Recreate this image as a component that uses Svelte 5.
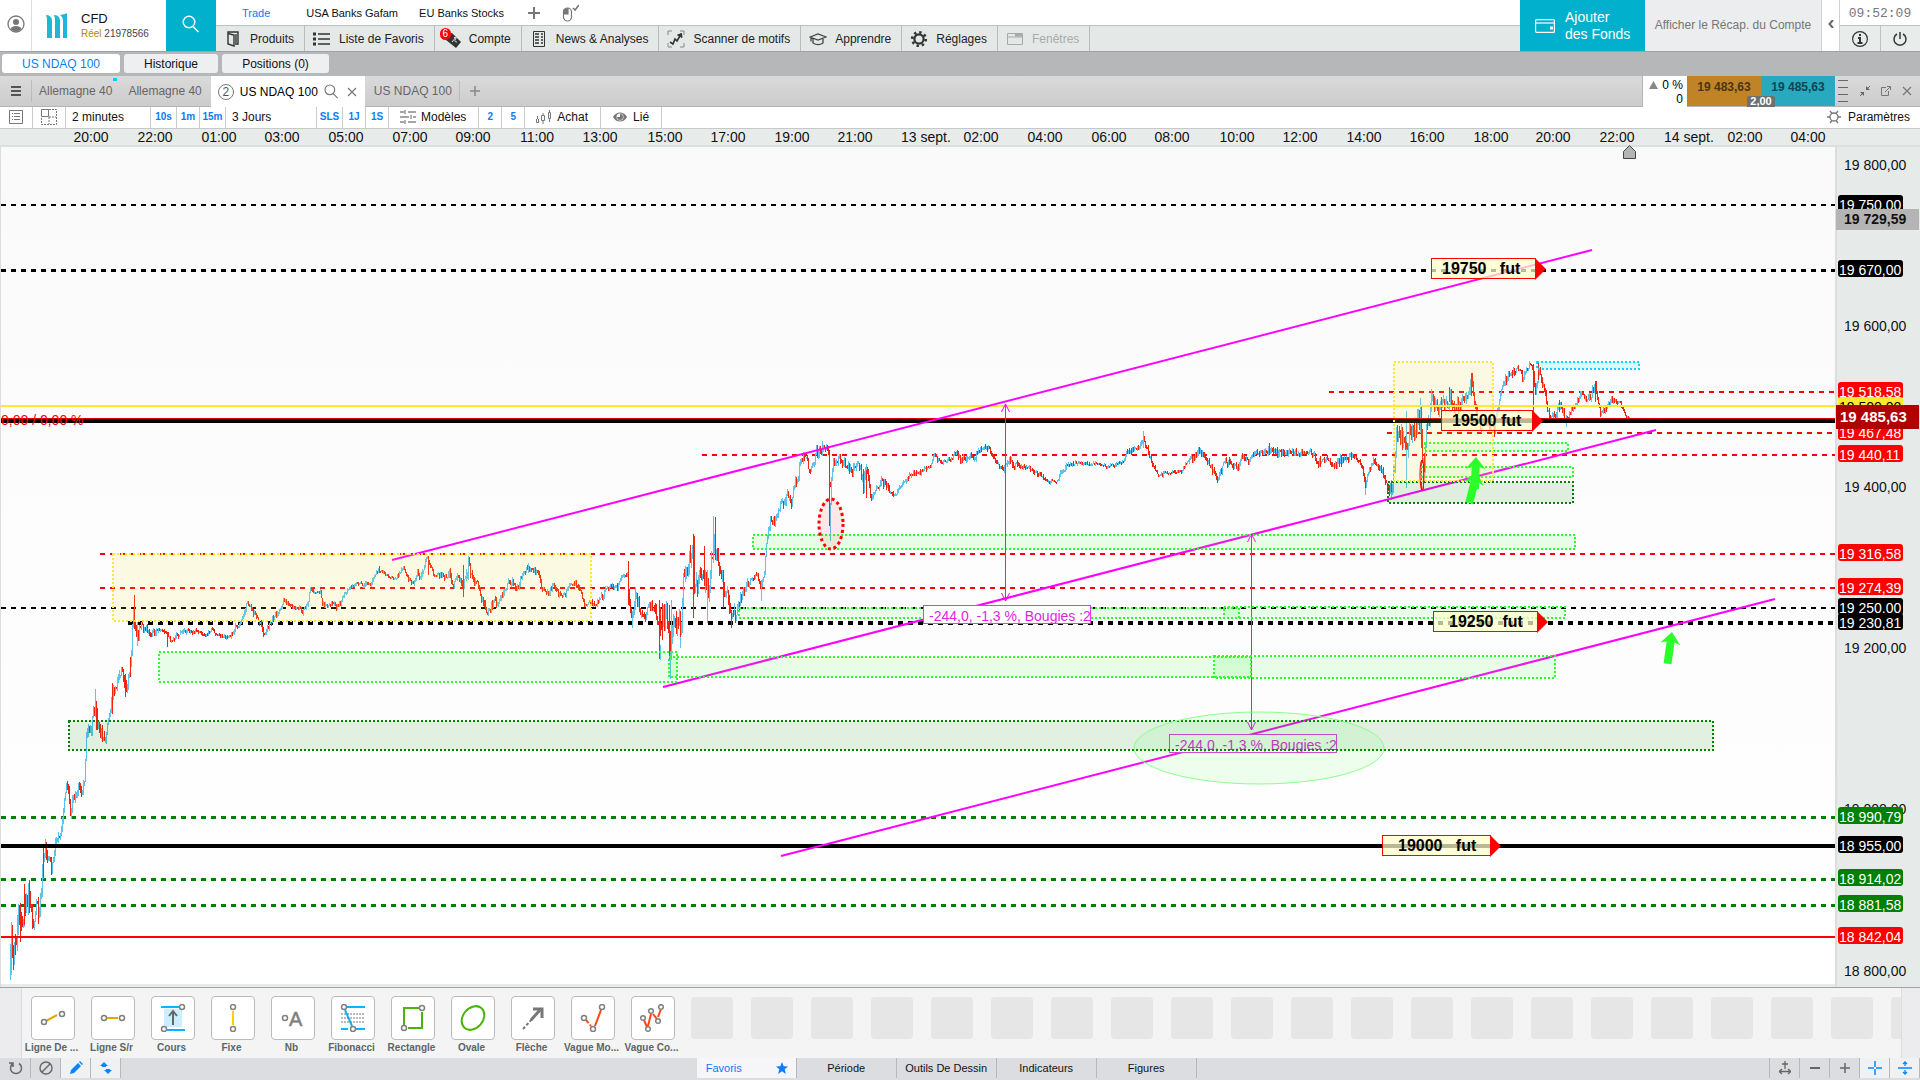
<script lang="ts">
    type Bar = { x: number; top: number; bottom: number };

    const workspaces = ['Trade', 'USA Banks Gafam', 'EU Banks Stocks'];
    const menu = [
        { icon: 'book', label: 'Produits' },
        { icon: 'list', label: 'Liste de Favoris' },
        { icon: 'tag', label: 'Compte', badge: 6 },
        { icon: 'news', label: 'News & Analyses' },
        { icon: 'scanner', label: 'Scanner de motifs' },
        { icon: 'hat', label: 'Apprendre' },
        { icon: 'gear', label: 'Réglages' },
        { icon: 'window', label: 'Fenêtres', disabled: true },
    ];
    const drawingTools = [
        { icon: 'trend', label: 'Ligne De ...' },
        { icon: 'level', label: 'Ligne S/r' },
        { icon: 'range', label: 'Cours' },
        { icon: 'fixed', label: 'Fixe' },
        { icon: 'text', label: 'Nb' },
        { icon: 'fibo', label: 'Fibonacci' },
        { icon: 'rect', label: 'Rectangle' },
        { icon: 'oval', label: 'Ovale' },
        { icon: 'arrow', label: 'Flèche' },
        { icon: 'wave', label: 'Vague Mo...' },
        { icon: 'waves', label: 'Vague Co...' },
    ];
    const emptySlots = Array.from({ length: 21 }, (_, i) => i);
    const paletteTabs = ['Période', 'Outils De Dessin', 'Indicateurs', 'Figures'];

    let workspace = $state('Trade');

    const times: [string, number][] = [
        ['20:00', 91], ['22:00', 155], ['01:00', 219], ['03:00', 282], ['05:00', 346], ['07:00', 410],
        ['09:00', 473], ['11:00', 537], ['13:00', 600], ['15:00', 665], ['17:00', 728], ['19:00', 792],
        ['21:00', 855], ['13 sept.', 926], ['02:00', 981], ['04:00', 1045], ['06:00', 1109], ['08:00', 1172],
        ['10:00', 1237], ['12:00', 1300], ['14:00', 1364], ['16:00', 1427], ['18:00', 1491], ['20:00', 1553],
        ['22:00', 1617], ['14 sept.', 1689], ['02:00', 1745], ['04:00', 1808],
    ];

    // top edges inside the plot
    const grid: [string, number][] = [
        ['19 800,00', 10], ['19 600,00', 171], ['19 400,00', 332], ['19 200,00', 493], ['19 000,00', 654], ['18 800,00', 816],
    ];
    const prices = [
        { text: '19 750,00', top: 48, kind: 'black' },
        { text: '19 670,00', top: 113, kind: 'black' },
        { text: '19 518,58', top: 235, kind: 'red' },
        { text: '19 500,00', top: 250, kind: 'yellow' },
        { text: '19 467,48', top: 276, kind: 'red' },
        { text: '19 440,11', top: 298, kind: 'red' },
        { text: '19 316,58', top: 397, kind: 'red' },
        { text: '19 274,39', top: 431, kind: 'red' },
        { text: '19 250,00', top: 451, kind: 'black' },
        { text: '19 230,81', top: 466, kind: 'black' },
        { text: '18 990,79', top: 660, kind: 'green' },
        { text: '18 955,00', top: 689, kind: 'black' },
        { text: '18 914,02', top: 722, kind: 'green' },
        { text: '18 881,58', top: 748, kind: 'green' },
        { text: '18 842,04', top: 780, kind: 'red' },
    ];

    const levels = [
        { x: 1, y: 205, w: 2, color: '#000' },
        { x: 1, y: 270.5, w: 3, color: '#000' },
        { x: 1329, y: 392, w: 2, color: '#f00' },
        { x: 1387, y: 433, w: 2, color: '#f00' },
        { x: 702, y: 455, w: 2, color: '#f00' },
        { x: 100, y: 554, w: 2, color: '#f00' },
        { x: 100, y: 588, w: 2, color: '#f00' },
        { x: 1, y: 608, w: 2, color: '#000' },
        { x: 128, y: 623, w: 4, color: '#000' },
        { x: 1, y: 817.5, w: 3, color: '#008000' },
        { x: 1, y: 879.5, w: 3, color: '#008000' },
        { x: 1, y: 905.5, w: 3, color: '#008000' },
    ];
    const solids = [
        { y: 406, w: 2, color: '#ffe92e' },
        { y: 421, w: 4, color: '#000' },
        { y: 418.5, w: 1, color: '#e00000' },
        { y: 846, w: 4, color: '#000' },
        { y: 937, w: 2, color: '#f00' },
    ];
    const trends = [
        [392, 560, 1592, 250],
        [663, 687, 1656, 430],
        [781, 856, 1775, 599],
    ];
    const zones = [
        [113, 554, 591, 621, 'yellow'],
        [159, 652, 677, 682, 'lime'],
        [669, 657, 1251, 677, 'lime'],
        [1214, 656, 1555, 678, 'lime'],
        [753, 535, 1575, 549, 'lime'],
        [739, 608, 1239, 618, 'lime'],
        [1224, 607, 1565, 618, 'lime'],
        [69, 721, 1713, 750, 'forest'],
        [1388, 482, 1573, 503, 'forest'],
        [1425, 443, 1568, 451, 'lime'],
        [1421, 467, 1573, 477, 'lime'],
        [1394, 362, 1493, 481, 'yellow'],
        [1537, 362, 1639, 369, 'cyan'],
    ] as [number, number, number, number, string][];
    const flags = [
        { x: 1431, y: 258, w: 105, tx: 1442, text: '19750   fut' },
        { x: 1441, y: 410, w: 92, tx: 1452, text: '19500 fut' },
        { x: 1433, y: 611, w: 105, tx: 1449, text: '19250  fut' },
        { x: 1382, y: 835, w: 109, tx: 1398, text: '19000   fut' },
    ];
    const arrows = [
        [1477, 472, 14],
        [1476, 457, 2],
        [1672, 632, 8],
    ];

    // x, y, candle spread
    const track = `9,978,3 10,945,12 13,945,16 15,948,12 17,930,14 19,912,10 21,930,12 24,900,12 27,905,10 29,895,12
        31,915,8 33,925,6 36,905,5 39,908,9 41,890,6 43,860,10 45,855,10 48,855,5 51,868,6 54,855,5 56,838,5 59,840,6
        62,825,5 64,800,4 66,782,3 68,790,6 70,812,7 73,800,5 76,792,5 79,785,5 81,797,6 84,780,3 86,735,8 88,730,8
        90,735,8 93,715,6 95,705,8 97,722,7 100,735,8 103,735,7 105,742,6 107,725,4 110,712,4 113,692,8 115,690,6
        118,675,6 121,670,5 124,680,6 126,690,5 129,672,4 131,650,4 132,625,5 133,612,6 136,632,5 138,635,5 141,622,4
        143,630,3 146,628,3 150,635,3 155,630,4 160,631,3 166,635,3 170,640,3 178,635,3 184,632,3 195,631,2 205,635,2
        212,630,2 220,637,2 230,636,2 235,628,3 240,622,3 244,612,3 247,603,2 251,609,3 255,616,3 259,622,3 263,632,4
        268,628,4 272,619,4 278,613,3 283,600,3 290,606,2 298,608,3 302,612,3 307,603,3 310,590,3 315,592,2 320,592,2
        322,605,3 328,607,3 333,602,3 336,608,2 342,600,3 348,588,2 356,582,2 362,584,3 370,583,3 375,575,3 377,570,3
        382,572,2 388,578,2 396,578,2 403,566,2 408,580,2 413,583,2 417,572,3 420,578,3 426,558,3 428,561,2 434,575,2
        441,575,3 446,578,3 449,574,4 453,584,4 456,575,4 460,582,4 463,585,6 466,575,6 468,565,8 470,570,6 473,580,4
        477,585,4 480,594,4 484,603,4 487,615,4 490,608,5 493,600,4 498,604,4 502,595,4 505,590,3 508,580,3 512,583,4
        516,590,3 519,584,3 522,573,3 528,568,4 533,570,3 538,572,3 542,590,3 548,592,3 554,585,3 558,595,3 562,598,3
        567,590,3 571,583,2 575,584,3 580,592,3 584,605,2 590,602,3 596,604,4 601,597,4 606,590,4 612,586,3 617,587,3
        622,577,3 627,577,3 629,600,5 632,615,6 635,600,6 637,598,6 640,615,4 645,617,4 649,604,4 654,608,5 657,620,10
        660,620,16 663,618,14 666,610,12 669,640,16 671,650,14 673,625,10 677,625,12 681,625,8 683,580,8 686,562,10
        690,560,10 693,550,8 694,590,14 697,590,10 700,575,8 703,580,10 706,580,14 708,600,6 711,560,8 714,545,10
        717,560,8 720,572,8 724,590,8 728,598,8 731,615,6 733,610,8 736,612,8 742,592,5 745,588,5 750,580,3 756,575,4
        760,585,4 764,572,4 766,545,4 768,530,4 770,520,5 774,522,4 779,508,4 784,500,5 787,497,6 791,502,5 795,482,5
        798,480,4 799,465,3 802,456,6 806,455,4 809,472,3 813,465,3 816,452,6 821,450,6 825,448,3 828,452,5 829,485,4
        831,480,3 833,462,4 838,460,5 843,462,5 850,472,5 855,466,5 858,463,4 863,482,8 867,468,5 870,498,4 873,495,3
        877,488,3 881,480,4 885,486,4 893,497,3 899,487,3 908,477,3 920,471,3 930,466,2 934,455,3 940,463,2 950,459,2
        956,451,3 960,461,3 968,456,4 973,460,4 980,449,3 988,449,3 994,460,3 1003,469,3 1008,462,4 1015,465,4
        1020,467,3 1028,468,3 1037,473,3 1048,482,2 1057,480,3 1065,467,3 1075,463,2 1085,463,2 1096,464,2 1106,467,2
        1115,464,2 1122,462,2 1127,452,3 1138,448,3 1143,440,3 1147,448,4 1152,465,3 1158,476,2 1165,473,2 1174,472,2
        1182,470,2 1189,457,4 1193,458,4 1199,451,4 1203,456,4 1206,458,3 1211,468,4 1217,480,3 1224,463,5 1232,465,4
        1238,467,3 1242,455,4 1248,461,3 1254,453,3 1263,452,3 1272,450,4 1282,453,4 1292,452,3 1303,454,3 1310,451,3
        1318,462,4 1327,459,3 1332,468,3 1340,460,4 1347,460,4 1353,455,3 1361,465,3 1365,486,4 1368,472,3 1373,460,3
        1380,468,3 1386,482,4 1389,492,6 1392,488,7 1394,468,8 1396,440,10 1399,435,10 1404,440,8 1407,448,10
        1409,425,10 1412,430,12 1415,430,12 1418,418,12 1420,420,12 1422,465,12 1424,468,10 1426,430,8 1429,418,7
        1431,402,10 1435,405,8 1438,410,7 1441,402,8 1445,404,7 1450,400,8 1455,408,7 1460,402,7 1465,398,8 1469,390,5
        1471,380,5 1474,400,5 1477,415,5 1480,428,4 1484,422,4 1490,427,4 1494,430,5 1497,410,5 1500,395,4 1505,380,5
        1510,375,5 1514,373,5 1519,372,6 1523,378,5 1527,370,3 1530,363,3 1533,372,3 1535,395,3 1537,380,5 1539,372,5
        1542,385,4 1545,390,4 1547,410,4 1550,415,4 1555,418,4 1558,402,5 1563,414,4 1567,420,3 1572,410,4 1577,400,4
        1580,395,4 1586,400,4 1592,392,5 1595,385,4 1597,400,4 1601,415,4 1605,408,4 1612,400,3 1620,404,2 1626,417,2
        1630,418,1`;
    // single long candles: x, top, bottom, direction
    const spikes = `11,922,975,u 12,925,958,d 15,934,955,d 20,903,942,d 24,884,925,d 29,880,913,d 38,897,924,d
        43,848,878,d 95,689,717,u 96,701,730,d 112,683,714,d 125,674,697,d 130,657,677,d 134,595,629,d 137,622,646,u
        167,632,647,d 428,556,575,d 463,565,597,d 468,556,580,u 628,561,605,d 632,612,628,u 635,587,610,u 659,600,659,d
        660,645,660,u 662,603,640,d 669,605,660,d 670,645,679,u 671,600,660,u 680,627,648,u 693,534,618,d 704,546,575,d
        707,570,623,u 713,516,560,u 715,517,560,d 723,575,608,d 731,610,628,d 761,580,601,u 822,441,455,u 829,458,526,d
        830,503,541,u 831,478,505,u 866,470,498,d 1143,431,448,u 1269,443,455,d 1365,478,495,u 1391,480,500,u
        1406,411,488,u 1420,398,430,u 1421,460,490,d 1423,464,489,d 1431,395,412,u 1449,387,402,d 1471,373,396,d
        1494,424,437,d 1533,364,420,d 1538,361,380,d 1566,415,427,u 1595,381,402,d`;

    // small seeded generator, so that the series is the same on each load
    function buildCandles() {
        const up: Bar[] = [];
        const down: Bar[] = [];
        const pts = track.trim().split(/\s+/).map((p) => p.split(',').map(Number));
        let seed = 17;
        const rnd = () => {
            seed = (seed * 1103515245 + 12345) % 2147483648;
            return seed / 2147483648;
        };
        let prev = pts[0][1];
        for (let i = 1; i < pts.length; i++) {
            const [x0, y0, a0] = pts[i - 1];
            const [x1, y1, a1] = pts[i];
            for (let x = x0 + 1; x <= x1; x++) {
                const t = (x - x0) / (x1 - x0);
                const amp = a0 + (a1 - a0) * t;
                const close = y0 + (y1 - y0) * t + (rnd() - 0.5) * amp * 1.6;
                const top = Math.round(Math.min(prev, close) - rnd() * amp * 0.9);
                const bottom = Math.max(top + 2, Math.round(Math.max(prev, close) + rnd() * amp * 0.9));
                (close < prev ? up : down).push({ x, top, bottom });
                prev = close;
            }
        }
        for (const s of spikes.trim().split(/\s+/)) {
            const [x, top, bottom, dir] = s.split(',');
            (dir === 'u' ? up : down).push({ x: +x, top: +top, bottom: +bottom });
        }
        const toPath = (bars: Bar[]) => bars.map((b) => `M${b.x + 0.5} ${b.top}V${b.bottom}`).join('');
        return { up: toPath(up), down: toPath(down) };
    }

    const candles = buildCandles();
</script>

{#snippet icon(name: string)}
    {#if name === 'book'}
        <svg width="16" height="18" viewBox="0 0 16 18" fill="none" stroke="#333" stroke-width="1.4"><path d="M3 3.5 9 5v11l-6-2zM3 3.5V2h10v12h-3M11 4v9" /></svg>
    {:else if name === 'list'}
        <svg width="18" height="14" viewBox="0 0 18 14" stroke="#333" stroke-width="1.6"><path d="M5 2h12M5 7h12M5 12h12" /><path d="M0 2h3M0 7h3M0 12h3" stroke-width="3" /></svg>
    {:else if name === 'tag'}
        <svg width="20" height="20" viewBox="0 0 20 20"><path d="M3 5 10 4l9 9-5 6-10-8z" fill="#333" /><path d="M12 8.500c2-.5 2.500 1 1.500 2s-1 2.500 1.500 2.500M10 13l5-6" stroke="#e4e9e8" fill="none" /></svg>
    {:else if name === 'news'}
        <svg width="14" height="16" viewBox="0 0 14 16" fill="none" stroke="#333"><path d="M1.500.5h11v15h-11z" /><path d="M3 3h4M9 3h2M3 6h4M9 6h2M3 9h4M9 9h2M3 12h4M9 12h2" stroke-width="1.500" /></svg>
    {:else if name === 'scanner'}
        <svg width="18" height="18" viewBox="0 0 18 18" fill="none" stroke="#333"><path d="M1 5V1h4M13 1h4v4M1 13v4h4M13 17h4v-4" stroke="#888" /><path d="m3 12 3 2 2-5 2 2 4-7" stroke-width="1.600" /><path d="m10.500 5 4-1.500.5 4z" fill="#333" /></svg>
    {:else if name === 'hat'}
        <svg width="18" height="14" viewBox="0 0 18 14" fill="none" stroke="#444" stroke-width="1.300"><path d="m1 5 8-3 8 3-8 3zM4 7v4c3 2 7 2 10 0V7M2 5.500v4" /></svg>
    {:else if name === 'gear'}
        <svg width="18" height="18" viewBox="0 0 18 18" fill="none" stroke="#333"><circle cx="9" cy="9" r="4.600" stroke-width="2.200" /><circle cx="9" cy="9" r="6.800" stroke-width="2.600" stroke-dasharray="2.400 2.940" /></svg>
    {:else if name === 'window'}
        <svg width="18" height="14" viewBox="0 0 18 14" fill="none" stroke="#aaa"><path d="M1.500 1.500h15v11h-15zM1.500 5h15" /><path d="M9 3h7" stroke-width="3" /></svg>
    {:else if name === 'search'}
        <svg viewBox="0 0 18 18" fill="none" stroke="currentColor" stroke-width="1.400"><circle cx="7" cy="7" r="5.800" /><path d="m11 11.500 5.500 5.500" /></svg>
    {:else if name === 'close'}
        <svg width="10" height="10" viewBox="0 0 10 10" stroke="#777" stroke-width="1.200"><path d="m1 1 8 8M9 1 1 9" /></svg>
    {:else if name === 'plus'}
        <svg width="12" height="12" viewBox="0 0 12 12" stroke="#777" stroke-width="2"><path d="M6 0v12M0 6h12" /></svg>
    {/if}
{/snippet}

{#snippet toolIcon(name: string)}
    <svg width="28" height="28" viewBox="0 0 28 28" fill="none" stroke-width="2">
        {#if name === 'trend'}
            <path d="m7 17 11-6" stroke="#e0a800" /><g class="knobs"><circle cx="5" cy="18" r="2.500" /><circle cx="23" cy="10" r="2.500" /></g>
        {:else if name === 'level'}
            <path d="M8 14h11" stroke="#e0a800" /><g class="knobs"><circle cx="5" cy="14" r="2.500" /><circle cx="23" cy="14" r="2.500" /></g>
        {:else if name === 'range'}
            <path d="M5 5h18v18H5z" fill="#ccefff" /><path d="M2 3h18M8 26h18" stroke="#00b8ff" /><path d="M14 21V7m-4 5 4-5 4 5" stroke="#666" /><g class="knobs"><circle cx="23" cy="3" r="2.500" /><circle cx="5" cy="25" r="2.500" /></g>
        {:else if name === 'fixed'}
            <path d="M14 7v14" stroke="#ffd000" /><g class="knobs"><circle cx="14" cy="3" r="2.500" /><circle cx="14" cy="25" r="2.500" /></g>
        {:else if name === 'text'}
            <g class="knobs"><circle cx="6" cy="14" r="2.500" /></g><text x="10" y="22" fill="#808080">A</text>
        {:else if name === 'fibo'}
            <path d="M8 3h18M2 25h7M17 25h9M6 6l7 16" stroke="#00b8ff" /><path d="M2 10h24M2 14h24M2 18h24" stroke="#777" stroke-width="1" stroke-dasharray="2 1" /><g class="knobs"><circle cx="5" cy="3" r="2.500" /><circle cx="14" cy="25" r="2.500" /></g>
        {:else if name === 'rect'}
            <path d="M20 4H5v17M9 24h14V8" stroke="#4bb409" /><g class="knobs"><circle cx="23" cy="4" r="2.500" /><circle cx="5" cy="24" r="2.500" /></g>
        {:else if name === 'oval'}
            <ellipse cx="14" cy="14" rx="13" ry="10" transform="rotate(-50 14 14)" stroke="#4bb409" />
        {:else if name === 'arrow'}
            <path d="m4 25 9-10" stroke="#777" stroke-dasharray="3 2" /><path d="m12 16 9-10" stroke="#777" stroke-width="3" /><path d="M14 5h9v9" stroke="#777" stroke-width="3" />
        {:else if name === 'wave'}
            <path d="m7 16 5 6" stroke="#ff4712" stroke-dasharray="4 2" /><path d="m16 22 6-16" stroke="#ff4712" /><g class="knobs"><circle cx="5" cy="14" r="2.500" /><circle cx="14" cy="25" r="2.500" /><circle cx="23" cy="3" r="2.500" /></g>
        {:else}
            <path d="m5 16 3 7m1-1 3-12m2 0 4 5m1-2 3-8" stroke="#ff4712" /><g class="knobs"><circle cx="4" cy="14" r="2.300" /><circle cx="9" cy="25" r="2.300" /><circle cx="12" cy="7" r="2.300" /><circle cx="19" cy="17" r="2.300" /><circle cx="22" cy="3" r="2.300" /></g>
        {/if}
    </svg>
{/snippet}

{#snippet measure(x: number, y1: number, y2: number, bx: number, by: number)}
    <g class="measure">
        <path d="M{x} {y1}V{y2}M{x - 4} {y1 + 8}l4-8 4 8M{x - 4} {y2 - 8}l4 8 4-8" />
        <rect x={bx + 0.5} y={by + 0.5} width="167" height="18" />
        <text x={bx + 6} y={by + 16}>-244,0, -1,3 %, Bougies :2</text>
    </g>
{/snippet}

<div class="app">
    <header class="top">
        <button class="user" aria-label="Profil">
            <svg width="18" height="20" viewBox="0 0 18 20"><circle cx="9" cy="10" r="8" fill="none" stroke="#777" stroke-width="1.300" /><circle cx="9" cy="8" r="3" fill="#777" /><path d="M3.500 15c1-4 10-4 11 0-3 3-8 3-11 0z" fill="#777" /></svg>
        </button>
        <div class="account">
            <svg width="22" height="26" viewBox="0 0 22 26" fill="#1cb9d6"><path d="M0 2q5 0 6 5v18H1V8Q1 4 0 2zM8 2q5 0 6 5v18H9V8Q9 4 8 2zM14 2q6-1 7-2v25h-4V8q0-4-3-6z" /></svg>
            <div>
                <div class="account-name">CFD</div>
                <div class="account-id"><span>Réel</span> 21978566</div>
            </div>
        </div>
        <button class="find" aria-label="Rechercher">{@render icon('search')}</button>
        <div class="nav">
            <nav class="workspaces">
                {#each workspaces as w}
                    <button class:current={w === workspace} onclick={() => (workspace = w)}>{w}</button>
                {/each}
                <button class="mini" aria-label="Ajouter un espace">{@render icon('plus')}</button>
                <button class="mouse" aria-label="Mode souris">
                    <svg width="18" height="18" viewBox="0 0 18 18" fill="none" stroke="#777" stroke-width="1.200"><rect x="2.500" y="4" width="8" height="13" rx="4" /><path d="M3 10V6l4-1.500V10z" fill="#777" /><path d="m12 4 2 2 4-5" stroke-width="1.600" /></svg>
                </button>
            </nav>
            <nav class="menu">
                {#each menu as m}
                    <button disabled={m.disabled}>
                        <span class="menu-icon">{@render icon(m.icon)}{#if m.badge}<span class="badge">{m.badge}</span>{/if}</span>
                        {m.label}
                    </button>
                {/each}
            </nav>
        </div>
        <button class="funds">
            <svg width="20" height="14" viewBox="0 0 20 14" fill="none" stroke="#fff" stroke-width="1.200"><rect x=".6" y=".6" width="18.800" height="12.800" rx="1" /><path d="M1 4h18" /><path d="M15 9h3" stroke-width="3" /></svg>
            <span>Ajouter<br />des Fonds</span>
        </button>
        <button class="recap">Afficher le Récap. du Compte</button>
        <button class="fold" aria-label="Replier"><svg width="6" height="8" viewBox="0 0 6 8" fill="none" stroke="#666" stroke-width="2"><path d="M5 0 1.500 4 5 8" /></svg></button>
        <div class="session">
            <time>09:52:09</time>
            <div class="session-actions">
                <button aria-label="Informations"><svg width="18" height="18" viewBox="0 0 18 18" fill="none" stroke="#333" stroke-width="1.200"><circle cx="9" cy="9" r="7.400" /><path d="M7 8h2v4.500M6.500 13h5" stroke-width="2" /><path d="M8 5h2" stroke-width="2" /></svg></button>
                <button aria-label="Déconnexion"><svg width="16" height="18" viewBox="0 0 16 18" fill="none" stroke="#333" stroke-width="1.500"><path d="M5 4a6 6 0 1 0 6 0M8 2v7" /></svg></button>
            </div>
        </div>
    </header>

    <nav class="views">
        <button class="current">US NDAQ 100</button>
        <button>Historique</button>
        <button>Positions (0)</button>
    </nav>

    <div class="tabs">
        <button class="burger" aria-label="Menu"><svg width="10" height="10" viewBox="0 0 10 10" stroke="#555" stroke-width="2"><path d="M0 1h10M0 5h10M0 9h10" /></svg></button>
        <button class="tab marked">Allemagne 40</button>
        <button class="tab">Allemagne 40</button>
        <div class="tab active">
            <span class="count">2</span>
            <span>US NDAQ 100</span>
            <button class="lens" aria-label="Chercher un marché">{@render icon('search')}</button>
            <button aria-label="Fermer l'onglet">{@render icon('close')}</button>
        </div>
        <button class="tab last">US NDAQ 100</button>
        <button class="add" aria-label="Nouvel onglet"><svg width="10" height="10" viewBox="0 0 10 10" stroke="#888" stroke-width="1.500"><path d="M5 0v10M0 5h10" /></svg></button>
        <div class="change">
            <span><svg width="9" height="8" viewBox="0 0 9 8" fill="#888"><path d="M4.500 0 9 8H0z" /></svg> 0 %</span>
            <span>0</span>
        </div>
        <div class="deal">
            <button class="sell">19 483,63</button>
            <button class="buy">19 485,63</button>
            <span class="spread">2,00</span>
        </div>
        <div class="window-actions">
            <svg width="10" height="24" viewBox="0 0 10 24" stroke="#666"><path d="M0 1.500h10M0 8.500h10M0 15.500h10M0 22.500h10" /></svg>
            <button aria-label="Réduire"><svg width="12" height="12" viewBox="0 0 12 12" stroke="#666" fill="#666"><path d="M1 11l3-3M11 1 8 4" /><path d="M1 7h4v4zM7 1v4h4z" stroke="none" /></svg></button>
            <button aria-label="Détacher"><svg width="10" height="10" viewBox="0 0 10 10" stroke="#777" fill="none"><path d="M5 1.500H.5v8h7V5M4 6l5-5M6 .5h3.500V4" /></svg></button>
            <button aria-label="Fermer">{@render icon('close')}</button>
        </div>
    </div>

    <div class="toolbar">
        <button class="cell square" aria-label="Liste"><svg width="14" height="14" viewBox="0 0 14 14" fill="none" stroke="#777"><path d="M.5.5h13v13H.5zM5 3.500h6M5 6.500h6M5 9.500h6M3 3.500h1M3 6.500h1M3 9.500h1" /></svg></button>
        <button class="cell square" aria-label="Disposition"><svg width="16" height="16" viewBox="0 0 16 16" fill="none" stroke="#777"><path d="M.5.5h7v7h-7z" /><path d="M8 .5h7.500v15H.5V8M8 8h7M8 8v7" stroke-dasharray="2 1" /></svg></button>
        <button class="cell period">2 minutes</button>
        <button class="cell short wide">10s</button>
        <button class="cell short">1m</button>
        <button class="cell short wide">15m</button>
        <button class="cell period days">3 Jours</button>
        <button class="cell short wide">SLS</button>
        <button class="cell short">1J</button>
        <button class="cell short">1S</button>
        <button class="cell action">
            <svg width="16" height="14" viewBox="0 0 16 14" stroke="#888" stroke-width="1.300"><path d="M0 2h4M8 2h8M0 7h9M13 7h3M0 12h4M8 12h8M5 0v4M11 5v4M5 10v4" /></svg>
            Modèles
        </button>
        <button class="cell short">2</button>
        <button class="cell short">5</button>
        <button class="cell action">
            <svg width="16" height="14" viewBox="0 0 16 14" fill="none" stroke="#777"><path d="M.5 9v3.500h2V9M5.500 5.500h3v5h-3zM7 3v2M7 11v3M12.500 2.500h2v6h-2zM13.500 0v2M13.500 9v3M1.500 6v3" /></svg>
            Achat
        </button>
        <button class="cell action">
            <svg width="16" height="12" viewBox="0 0 16 12"><path d="M1 6c3-6 11-6 14 0-3 6-11 6-14 0z" fill="#777" /><circle cx="8" cy="6" r="3.500" fill="#fff" /><path d="M8 6V3a3 3 0 1 1-3 3z" fill="#777" /></svg>
            Lié
        </button>
        <button class="settings">
            <svg width="14" height="14" viewBox="0 0 14 14" fill="none" stroke="#777" stroke-width="1.300"><circle cx="7" cy="7" r="4" /><path d="M0 7h3M11 7h3M3 1l2 2.500M11 1 9 3.500M3 13l2-2.500M11 13l-2-2.500" /></svg>
            Paramètres
        </button>
    </div>

    <div class="time-axis">
        {#each times as [label, x]}
            <span style="left: {x}px">{label}</span>
        {/each}
    </div>

    <main class="chart">
        <svg class="plot" width="100%" height="100%">
            <g transform="translate(0 -147)">
                <g shape-rendering="crispEdges">
                    {#each levels as l}
                        <line x1={l.x} x2="100%" y1={l.y} y2={l.y} stroke={l.color} stroke-width={l.w} stroke-dasharray="5 5" />
                    {/each}
                    <path class="up" d={candles.up} />
                    <path class="down" d={candles.down} />
                    {#each solids as s}
                        <line x1="1" x2="100%" y1={s.y} y2={s.y} stroke={s.color} stroke-width={s.w} />
                    {/each}
                </g>
                {#each trends as [x1, y1, x2, y2]}
                    <line class="trend" {x1} {y1} {x2} {y2} />
                {/each}
                {@render measure(1251.5, 534, 730, 1169, 734)}
                <g shape-rendering="crispEdges">
                    {#each zones as [x1, y1, x2, y2, kind]}
                        <rect class="zone {kind}" x={x1} y={y1} width={x2 - x1} height={y2 - y1} />
                    {/each}
                </g>
                {@render measure(1005.5, 404, 601, 923, 605)}
                <ellipse class="target" cx="831" cy="524" rx="12" ry="25" />
                <ellipse class="pool" cx="1259" cy="748" rx="125" ry="36" />
                <ellipse class="drop" cx="1422" cy="475" rx="2" ry="15" />
                {#each arrows as [x, y, angle]}
                    <path class="arrow" transform="translate({x} {y}) rotate({angle})" d="M0 0 10 12 4 10V32H-4V10L-10 12z" />
                {/each}
                {#each flags as f}
                    <g class="flag">
                        <rect x={f.x + 0.5} y={f.y + 0.5} width={f.w - 1} height="20" />
                        <path d="M{f.x + f.w - 1} {f.y}l11 11-11 11z" />
                        <text x={f.tx} y={f.y + 16}>{f.text}</text>
                    </g>
                {/each}
                <text class="variation" x="1" y="425">0,00 / 0,00 %</text>
                <path d="M1623.500 158.500v-7l6-6 6 6v7z" fill="#b4b4b4" stroke="#444" />
            </g>
        </svg>
        <aside class="price-axis">
            {#each grid as [text, top]}
                <span class="grid" style="top: {top}px">{text}</span>
            {/each}
            {#each prices as p}
                <span class="price {p.kind}" style="top: {p.top}px">{p.text}</span>
            {/each}
            <span class="cursor">19 729,59</span>
            <span class="quote">19 485,63</span>
        </aside>
    </main>

    <section class="palette">
        <div class="slots">
            {#each drawingTools as t}
                <button class="tool">
                    <span class="tile">{@render toolIcon(t.icon)}</span>
                    <span class="tool-name">{t.label}</span>
                </button>
            {/each}
            {#each emptySlots as i (i)}
                <span class="slot"></span>
            {/each}
        </div>
    </section>

    <footer>
        <button class="sq" aria-label="Réinitialiser"><svg width="14" height="14" viewBox="0 0 14 14" fill="none" stroke="#666" stroke-width="1.500"><path d="M4 2.500a5.500 5.500 0 1 0 6 0M4 6V2H0" /></svg></button>
        <button class="sq" aria-label="Désactiver"><svg width="14" height="14" viewBox="0 0 14 14" fill="none" stroke="#666" stroke-width="1.400"><circle cx="7" cy="7" r="6" /><path d="m3 11 8-8" /></svg></button>
        <button class="sq on" aria-label="Dessiner"><svg width="14" height="14" viewBox="0 0 14 14" fill="#0a84ff"><path d="m1 13 1-4 7-7 3 3-7 7zM10 1l1-1 3 3-1 1z" /></svg></button>
        <button class="sq on" aria-label="Ordres"><svg width="12" height="12" viewBox="0 0 12 12" fill="#0a84ff"><path d="M4 0l4 4H6v1H2V4H0zM8 12l4-4h-2V7H6v1H4z" /></svg></button>
        <div class="palette-tabs">
            <button class="current">Favoris <svg width="12" height="12" viewBox="0 0 12 12" fill="#0a7cff"><path d="m6 0 1.700 4.200 4.300.2-3.300 2.800L9.800 12 6 9.300 2.200 12l1.100-4.800L0 4.400l4.300-.2z" /></svg></button>
            {#each paletteTabs as t}
                <button>{t}</button>
            {/each}
        </div>
        <div class="zoom">
            <button class="sq" aria-label="Ajuster"><svg width="12" height="14" viewBox="0 0 12 14" fill="none" stroke="#666" stroke-width="1.300"><path d="M6 0v8M3 3h6M0 10.500h12M3 8l-3 2.500L3 13M9 8l3 2.500L9 13" /></svg></button>
            <button class="sq" aria-label="Dézoomer"><svg width="10" height="10" viewBox="0 0 10 10" stroke="#666" stroke-width="2"><path d="M0 5h10" /></svg></button>
            <button class="sq" aria-label="Zoomer"><svg width="10" height="10" viewBox="0 0 10 10" stroke="#666" stroke-width="1.500"><path d="M0 5h10M5 0v10" /></svg></button>
            <button class="sq on" aria-label="Réticule"><svg width="14" height="14" viewBox="0 0 14 14" stroke="#0a84ff" stroke-width="1.500"><path d="M0 7h6M8 7h6M7 0v6M7 8v6" /></svg></button>
            <button class="sq on" aria-label="Échelle"><svg width="14" height="14" viewBox="0 0 14 14" fill="none" stroke="#0a84ff" stroke-width="1.300"><path d="M0 7h14M7 1v4M7 9v4M5 3l2-2 2 2M5 11l2 2 2-2" /></svg></button>
        </div>
    </footer>
</div>

<style>
    :global(body) {
        margin: 0;
        background: #fff;
    }

    .app {
        display: flex;
        flex-direction: column;
        min-height: 100vh;
        overflow: hidden;
        font: 12px/14px 'Liberation Sans', Arial, sans-serif;
        color: #111;
    }

    button {
        display: flex;
        align-items: center;
        padding: 0;
        border: 0;
        background: none;
        color: inherit;
        font: inherit;
        white-space: nowrap;
    }

    svg {
        display: block;
        flex: none;
    }

    .top {
        display: flex;
        height: 51px;
        border-bottom: 1px solid #98a2b3;
    }

    .user {
        width: 31px;
        justify-content: center;
        border-right: 1px solid #ddd;
        box-sizing: content-box;
        padding-bottom: 4px;
    }

    .account {
        display: flex;
        align-items: center;
        gap: 13px;
        width: 120px;
        padding-left: 14px;
    }

    .account-name {
        font-size: 13px;
        line-height: 16px;
    }

    .account-id {
        font-size: 10px;
        color: #444;
    }

    .account-id span {
        color: #b8860b;
    }

    .find {
        width: 50px;
        justify-content: center;
        background: #00b0cc;
        color: #fff;
    }

    .find svg {
        width: 18px;
        height: 18px;
        margin-bottom: 4px;
    }

    .nav {
        flex: 1;
        display: flex;
        flex-direction: column;
    }

    .workspaces {
        display: flex;
        align-items: center;
        gap: 21px;
        height: 25px;
        padding-left: 26px;
        font-size: 11px;
        border-bottom: 1px solid #bcc1c1;
    }

    .workspaces button:first-child {
        margin-right: 15px;
    }

    .workspaces .current,
    .views .current {
        color: #0a7cff;
    }

    .mini {
        margin-left: 3px;
    }

    .menu {
        display: flex;
        flex: 1;
        background: #e4e9e8;
    }

    .menu button {
        gap: 6px;
        padding: 0 10px 0 6px;
        border-right: 1px solid #b8bcbc;
        color: #222;
    }

    .menu button:disabled {
        color: #aaa;
    }

    .menu-icon {
        position: relative;
        display: flex;
        justify-content: center;
        width: 22px;
    }

    .badge {
        position: absolute;
        left: -1px;
        top: -1px;
        width: 11px;
        border-radius: 6px;
        background: #f00;
        color: #fff;
        font-size: 10px;
        line-height: 12px;
    }

    .funds {
        gap: 10px;
        width: 125px;
        padding-left: 15px;
        background: #00b0cc;
        color: #fff;
        font-size: 14px;
        line-height: 17px;
        text-align: left;
    }

    .recap {
        justify-content: center;
        width: 176px;
        padding-bottom: 1px;
        background: #ebedef;
        color: #777;
    }

    .fold {
        justify-content: center;
        width: 19px;
        padding-bottom: 3px;
        border: solid #d0d0d0;
        border-width: 0 1px;
    }

    .session {
        display: flex;
        flex-direction: column;
        width: 80px;
    }

    time {
        height: 25px;
        border-bottom: 1px solid #bcc1c1;
        color: #777;
        font: 13px/27px 'Liberation Mono', monospace;
        text-align: center;
    }

    .session-actions {
        flex: 1;
        display: flex;
        background: #e8edec;
    }

    .session-actions button {
        flex: 1;
        justify-content: center;
    }

    .session-actions button + button {
        border-left: 1px solid #bcc1c1;
    }

    .views {
        display: flex;
        gap: 4px;
        padding: 2px 2px 3px;
        background: #b5b7b9;
    }

    .views button {
        justify-content: center;
        height: 19px;
        width: 107px;
        border-radius: 3px;
        background: #eeeff1;
    }

    .views .current {
        width: 118px;
        background: #fff;
    }

    .views button:nth-child(2) {
        width: 94px;
    }

    .tabs {
        display: flex;
        height: 30px;
        border-bottom: 1px solid #b4b4b4;
        background: linear-gradient(#dadada, #cccccc);
        color: #666;
    }

    .burger {
        justify-content: center;
        width: 32px;
        margin: 4px 0;
        border-right: 1px solid #bbb;
    }

    .tab {
        position: relative;
        padding: 0 9px 0 7px;
    }

    .tab.marked::after {
        content: '';
        position: absolute;
        right: 4px;
        top: 2px;
        width: 4px;
        height: 3px;
        background: #00d0ff;
    }

    .tab.active {
        display: flex;
        align-items: center;
        gap: 6px;
        height: 31px;
        padding: 0 8px 0 7px;
        background: #fff;
        color: #000;
    }

    .tab.active .lens {
        color: #777;
        margin-right: 2px;
    }

    .lens svg {
        width: 15px;
        height: 15px;
    }

    .count {
        width: 14px;
        border: 1px solid #777;
        border-radius: 50%;
        color: #555;
        text-align: center;
    }

    .tab.last {
        padding-left: 9px;
        padding-right: 7px;
    }

    .add {
        margin: 5px 0;
        padding-left: 10px;
        border-left: 1px solid #bbb;
    }

    .change {
        display: flex;
        flex-direction: column;
        align-items: flex-end;
        justify-content: center;
        box-sizing: border-box;
        width: 45px;
        height: 31px;
        margin-left: auto;
        padding-right: 4px;
        border-left: 1px solid #b4b4b4;
        background: #fff;
        color: #000;
    }

    .change span {
        display: flex;
        align-items: center;
        gap: 4px;
    }

    .deal {
        position: relative;
        display: flex;
        width: 148px;
        font-weight: bold;
    }

    .deal button {
        flex: 1;
        justify-content: center;
        align-items: flex-start;
        padding-top: 4px;
    }

    .sell {
        background: #c08427;
        color: #4c3511;
    }

    .buy {
        background: #28a9c0;
        color: #104450;
    }

    .spread {
        position: absolute;
        left: 60px;
        bottom: -1px;
        width: 28px;
        border-radius: 2px 2px 0 0;
        background: #6b7072;
        color: #fff;
        font-size: 11px;
        line-height: 11px;
        text-align: center;
    }

    .window-actions {
        display: flex;
        align-items: center;
        justify-content: space-between;
        width: 74px;
        padding: 0 8px 0 3px;
    }

    .toolbar {
        display: flex;
        height: 21px;
        border-bottom: 1px solid #c6c9c9;
        background: #fff;
    }

    .cell {
        padding-bottom: 1px;
        border-right: 1px solid #ccc;
    }

    .square {
        justify-content: center;
        width: 33px;
    }

    .period {
        width: 85px;
        padding-left: 6px;
    }

    .period.days {
        width: 91px;
    }

    .short {
        justify-content: center;
        width: 23px;
        color: #0a7cff;
        font-size: 10px;
        font-weight: bold;
    }

    .short.wide {
        width: 26px;
    }

    .action {
        gap: 5px;
        padding: 0 12px 1px 11px;
    }

    .settings {
        gap: 7px;
        margin-left: auto;
        padding: 0 10px 1px 0;
    }

    .time-axis {
        position: relative;
        height: 16px;
        border-bottom: 2px solid #dcdfde;
        background: #e7eceb;
        font-size: 14px;
        line-height: 16px;
    }

    .time-axis span {
        position: absolute;
        transform: translateX(-50%);
        white-space: nowrap;
    }

    .chart {
        flex: 1;
        display: flex;
        min-height: 837px;
        border-bottom: 1px solid #9ea5a4;
    }

    .plot {
        position: relative;
        flex: 1;
        width: 0;
        height: auto;
        overflow: visible;
        background: linear-gradient(#fafafa, #fff);
        box-shadow: inset 1px 0 #ddd, inset 0 -3px #e7eceb;
    }

    .up,
    .down {
        fill: none;
        stroke: #5cc3ee;
    }

    .down {
        stroke: #f22410;
    }

    .trend {
        stroke: #f0f;
        stroke-width: 2;
    }

    .zone {
        stroke-width: 2;
        stroke-dasharray: 2 2;
    }

    .yellow {
        stroke: #ffe92e;
        fill: rgb(255 233 46 / 12%);
    }

    .lime {
        stroke: #2bff2b;
        fill: rgb(43 255 43 / 10%);
    }

    .forest {
        stroke: #008000;
        fill: rgb(0 128 0 / 11%);
    }

    .cyan {
        stroke: #00d8ff;
        fill: rgb(0 216 255 / 12%);
    }

    .measure path {
        fill: none;
        stroke: #f0f;
    }

    .measure rect {
        fill: #fff;
        stroke: #e3e;
    }

    .measure text {
        fill: #e31ee3;
        font-size: 14px;
    }

    .target {
        fill: rgb(255 0 0 / 8%);
        stroke: #f00;
        stroke-width: 3;
        stroke-dasharray: 3 3;
    }

    .pool {
        fill: rgb(43 255 43 / 8%);
        stroke: #8cff8c;
    }

    .drop {
        fill: none;
        stroke: #f00;
    }

    .arrow {
        fill: #2bff2b;
    }

    .flag rect {
        fill: rgb(255 255 204 / 72%);
        stroke: #f00;
    }

    .flag path {
        fill: #f00;
    }

    .flag text {
        font-size: 16px;
        font-weight: bold;
        white-space: pre;
    }

    .variation {
        fill: #f00;
        font-size: 14px;
    }

    .price-axis {
        position: relative;
        width: 83px;
        border-left: 2px solid #dcdede;
        background: #e6ebea;
        font-size: 14px;
        line-height: 17px;
    }

    .price-axis span {
        position: absolute;
        box-sizing: border-box;
        white-space: nowrap;
    }

    .price-axis .grid {
        left: 7px;
    }

    .price {
        left: 1px;
        width: 65px;
        height: 17px;
        padding-left: 1px;
        border-radius: 3px;
        color: #fff;
        line-height: 20px;
    }

    .price.black {
        background: #000;
    }

    .price.red {
        background: #f00;
    }

    .price.green {
        background: #008000;
    }

    .price.yellow {
        background: #ffe92e;
        color: #000;
    }

    .price-axis .cursor,
    .price-axis .quote {
        left: -1px;
        right: 1px;
        top: 62px;
        padding-left: 8px;
        background: #b4b4b4;
        font-weight: bold;
        line-height: 21px;
    }

    .price-axis .quote {
        top: 258px;
        padding-left: 4px;
        background: #b00000;
        color: #fff;
        font-size: 15px;
        line-height: 24px;
    }

    .palette {
        padding: 0 18px 0 21px;
        height: 70px;
        background: #ececee;
    }

    .slots {
        display: flex;
        box-sizing: border-box;
        height: 70px;
        padding: 8px 0 0 1px;
        border: solid #dcdcdc;
        border-width: 0 1px;
        background: #f4f4f4;
        overflow: hidden;
    }

    .tool {
        flex: none;
        flex-direction: column;
        gap: 1px;
        width: 60px;
    }

    .tile {
        display: flex;
        align-items: center;
        justify-content: center;
        box-sizing: border-box;
        width: 44px;
        height: 44px;
        border: 1px solid #bbb;
        border-radius: 4px;
        background: #fff;
    }

    .tile text {
        font-size: 20px;
        stroke: #808080;
        stroke-width: 0.5px;
    }

    .knobs {
        fill: #fff;
        stroke: #808080;
        stroke-width: 1.5px;
    }

    .tool-name {
        padding-right: 3px;
        color: #5c6666;
        font-size: 10px;
        font-weight: bold;
        line-height: 14px;
    }

    .slot {
        flex: none;
        width: 42px;
        height: 42px;
        margin: 1px 10px 1px 8px;
        border-radius: 4px;
        background: #e6e6e6;
    }

    footer {
        display: flex;
        height: 20px;
        padding: 0 0 2px 1px;
        background: #dcdde0;
        font-size: 11px;
    }

    .sq {
        box-sizing: border-box;
        justify-content: center;
        width: 30px;
        border-right: 1px solid #b8b8ba;
    }

    .sq.on {
        background: #f0f1f3;
    }

    .palette-tabs {
        display: flex;
        margin-left: 30%;
    }

    .palette-tabs button {
        box-sizing: border-box;
        justify-content: center;
        width: 100px;
        border-right: 1px solid #b8b8ba;
    }

    .palette-tabs .current {
        justify-content: space-between;
        padding: 0 8px 0 9px;
        background: #f6f6f8;
        color: #0a7cff;
    }

    .zoom {
        display: flex;
        margin-left: auto;
        border-left: 1px solid #b8b8ba;
    }
</style>
